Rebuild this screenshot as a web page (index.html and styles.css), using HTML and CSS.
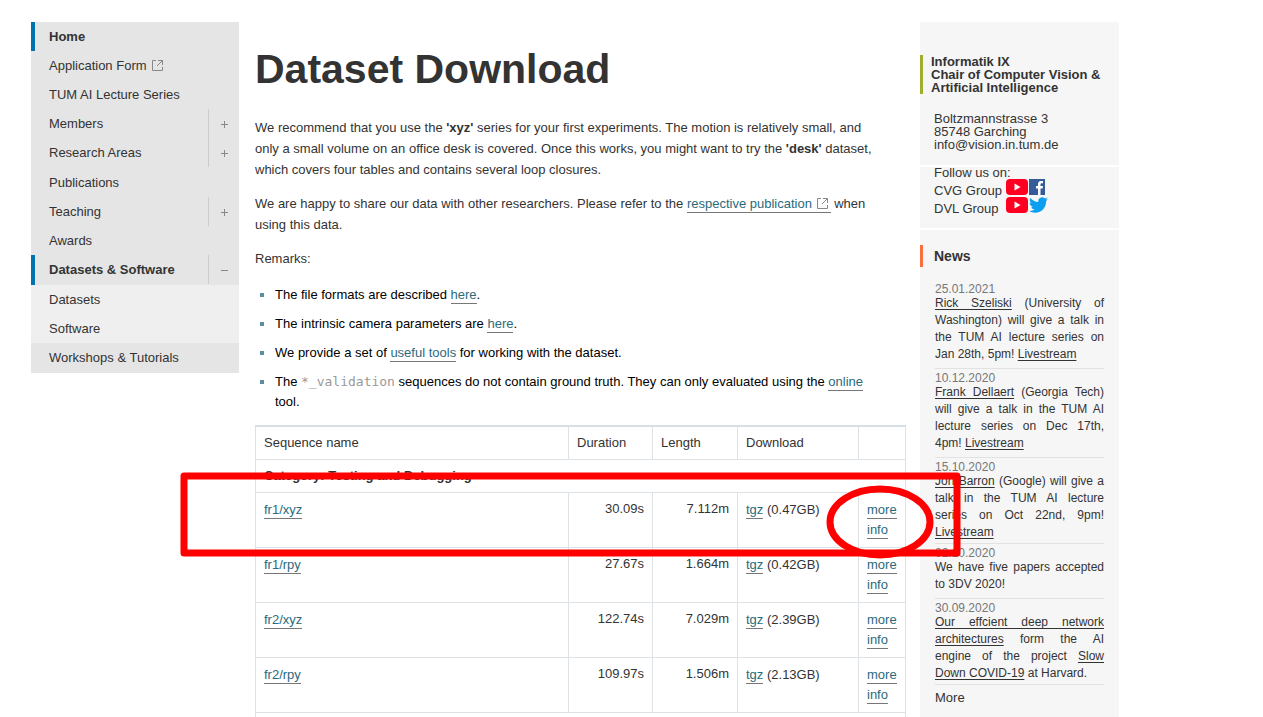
FILE: index.html
```html
<!DOCTYPE html>
<html lang="en">
<head>
<meta charset="utf-8">
<title>Dataset Download</title>
<link rel="stylesheet" href="styles.css">
</head>
<body>
<div class="page">
  <nav class="menu" aria-label="Main">
    <ul class="menu-list">
      <li class="menu-item current"><a href="#">Home</a></li>
      <li class="menu-item"><a href="#">Application Form <svg class="ext" viewBox="0 0 11 11"><path d="M4 .5H.5v10h10V7M6 .5h4.500V5M10.500.5 5 6"/></svg></a></li>
      <li class="menu-item"><a href="#">TUM AI Lecture Series</a></li>
      <li class="menu-item"><a href="#">Members</a><button class="toggle" aria-label="Expand Members"><svg viewBox="0 0 7 7"><path d="M0 3.500h7M3.500 0v7"/></svg></button></li>
      <li class="menu-item spaced"><a href="#">Research Areas</a><button class="toggle" aria-label="Expand Research Areas"><svg viewBox="0 0 7 7"><path d="M0 3.500h7M3.500 0v7"/></svg></button></li>
      <li class="menu-item"><a href="#">Publications</a></li>
      <li class="menu-item"><a href="#">Teaching</a><button class="toggle" aria-label="Expand Teaching"><svg viewBox="0 0 7 7"><path d="M0 3.500h7M3.500 0v7"/></svg></button></li>
      <li class="menu-item"><a href="#">Awards</a></li>
      <li class="menu-item current spaced"><a href="#">Datasets &amp; Software</a><button class="toggle" aria-label="Collapse Datasets and Software"><svg viewBox="0 0 7 7"><path d="M0 3.500h7"/></svg></button></li>
      <li class="menu-item sub"><a href="#">Datasets</a></li>
      <li class="menu-item sub"><a href="#">Software</a></li>
      <li class="menu-item spaced"><a href="#">Workshops &amp; Tutorials</a></li>
    </ul>
  </nav>

  <main class="content">
    <h1 class="title">Dataset Download</h1>
    <p class="para">We recommend that you use the <b>'xyz'</b> series for your first experiments. The motion is relatively small, and<br>only a small volume on an office desk is covered. Once this works, you might want to try the <b>'desk'</b> dataset,<br>which covers four tables and contains several loop closures.</p>
    <p class="para">We are happy to share our data with other researchers. Please refer to the <a class="link" href="#">respective publication <svg class="ext" viewBox="0 0 11 11"><path d="M4 .5H.5v10h10V7M6 .5h4.500V5M10.500.5 5 6"/></svg></a> when<br>using this data.</p>
    <p class="para">Remarks:</p>
    <ul class="remarks">
      <li>The file formats are described <a class="link" href="#">here</a>.</li>
      <li>The intrinsic camera parameters are <a class="link" href="#">here</a>.</li>
      <li>We provide a set of <a class="link" href="#">useful tools</a> for working with the dataset.</li>
      <li>The <code>*_validation</code> sequences do not contain ground truth. They can only evaluated using the <a class="link" href="#">online</a><br>tool.</li>
    </ul>
    <table class="sequences">
      <colgroup><col><col class="c-duration"><col class="c-length"><col class="c-download"><col class="c-more"></colgroup>
      <thead>
        <tr><th>Sequence name</th><th>Duration</th><th>Length</th><th>Download</th><th></th></tr>
      </thead>
      <tbody>
        <tr class="category"><td colspan="5"><b>Category: Testing and Debugging</b></td></tr>
        <tr><td><a class="link" href="#">fr1/xyz</a></td><td class="num">30.09s</td><td class="num">7.112m</td><td><a class="link" href="#">tgz</a> (0.47GB)</td><td><a class="link" href="#">more info</a></td></tr>
        <tr><td><a class="link" href="#">fr1/rpy</a></td><td class="num">27.67s</td><td class="num">1.664m</td><td><a class="link" href="#">tgz</a> (0.42GB)</td><td><a class="link" href="#">more info</a></td></tr>
        <tr><td><a class="link" href="#">fr2/xyz</a></td><td class="num">122.74s</td><td class="num">7.029m</td><td><a class="link" href="#">tgz</a> (2.39GB)</td><td><a class="link" href="#">more info</a></td></tr>
        <tr><td><a class="link" href="#">fr2/rpy</a></td><td class="num">109.97s</td><td class="num">1.506m</td><td><a class="link" href="#">tgz</a> (2.13GB)</td><td><a class="link" href="#">more info</a></td></tr>
        <tr><td colspan="5"></td></tr>
      </tbody>
    </table>
  </main>

  <aside class="side">
    <section class="address">
      <h2 class="chair">Informatik IX<br>Chair of Computer Vision &amp;<br>Artificial Intelligence</h2>
      <address class="lines">Boltzmannstrasse 3<br>85748 Garching<br>info@vision.in.tum.de</address>
    </section>
    <section class="follow">
      <div>Follow us on:</div>
      <div class="group"><span class="group-name">CVG Group</span>
        <a href="#" aria-label="CVG on YouTube"><svg class="yt" viewBox="0 0 22 16"><rect width="22" height="16" rx="4" fill="#ff0022"/><path d="M8.500 4.500v7l6-3.500z" fill="#fff"/></svg></a>
        <a href="#" aria-label="CVG on Facebook"><svg class="sq" viewBox="0 0 16 16"><path fill="#365b99" d="M0 0h16v16H0z"/><path fill="#fff" d="M9 16V9.500H7V7h2V5.200C9 3.200 10.200 2 12 2h2v2.300h-1.300c-.8 0-1.200.4-1.200 1.100V7H14l-.4 2.500h-2.100V16z"/></svg></a></div>
      <div class="group"><span class="group-name">DVL Group</span>
        <a href="#" aria-label="DVL on YouTube"><svg class="yt" viewBox="0 0 22 16"><rect width="22" height="16" rx="4" fill="#ff0022"/><path d="M8.500 4.500v7l6-3.500z" fill="#fff"/></svg></a>
        <a href="#" aria-label="DVL on Twitter"><svg class="tw" viewBox="0 2 24 20"><path fill="#0a9ff0" d="M23.950 4.570a10 10 0 0 1-2.820.77 4.960 4.960 0 0 0 2.160-2.720c-.95.55-2 .95-3.130 1.180a4.920 4.920 0 0 0-8.380 4.480C7.690 8.090 4.070 6.130 1.640 3.160a4.820 4.820 0 0 0-.67 2.480c0 1.710.87 3.210 2.190 4.100a4.900 4.900 0 0 1-2.230-.62v.06a4.920 4.920 0 0 0 3.950 4.830 5 5 0 0 1-2.210.08 4.940 4.940 0 0 0 4.600 3.420A9.870 9.870 0 0 1 0 19.540a13.990 13.990 0 0 0 7.550 2.210c9.050 0 14-7.500 14-13.980 0-.21 0-.42-.02-.63a9.940 9.940 0 0 0 2.420-2.570z"/></svg></a></div>
    </section>
    <section class="news">
      <h2 class="news-title">News</h2>
      <div class="news-list">
        <article class="entry"><time>25.01.2021</time><p><a href="#">Rick Szeliski</a> (University of Washington) will give a talk in the TUM AI lecture series on Jan 28th, 5pm! <a href="#">Livestream</a></p></article>
        <article class="entry"><time>10.12.2020</time><p><a href="#">Frank Dellaert</a> (Georgia Tech) will give a talk in the TUM AI lecture series on Dec 17th, 4pm! <a href="#">Livestream</a></p></article>
        <article class="entry tight"><time>15.10.2020</time><p><a href="#">Jon Barron</a> (Google) will give a talk in the TUM AI lecture series on Oct 22nd, 9pm! <a href="#">Livestream</a></p></article>
        <article class="entry"><time>02.10.2020</time><p>We have five papers accepted to 3DV 2020!</p></article>
        <article class="entry tight"><time>30.09.2020</time><p><a href="#">Our effcient deep network architectures</a> form the AI engine of the project <a href="#">Slow Down COVID-19</a> at Harvard.</p></article>
        <a class="more" href="#">More</a>
      </div>
    </section>
  </aside>
</div>
<svg class="marks" width="800" height="100" viewBox="0 0 800 100" aria-hidden="true">
  <rect x="14" y="16" width="773" height="77"/>
  <ellipse cx="710" cy="62" rx="50" ry="33"/>
</svg>
</body>
</html>
```
FILE: styles.css
```css
* { box-sizing: border-box; }

body {
  margin: 0;
  height: 100vh;
  overflow: hidden;
  position: relative;
  background: #fff;
  color: #333;
  font-family: "Liberation Sans", Arial, sans-serif;
  font-size: 13px;
}

h1, h2, p, ul { margin: 0; padding: 0; }
ul { list-style: none; }
a { color: inherit; text-decoration: none; }

.page {
  display: grid;
  grid-template-columns: 208px minmax(0, 1fr) 199px;
  min-height: 100vh;
  padding: 22px 144px 0 31px;
}

.menu-item {
  display: flex;
  line-height: 29px;
  background: #e5e5e5;
  border-left: 4px solid #e5e5e5;
}
.menu-item a { flex: 1; padding-left: 14px; }
.menu-item.spaced { padding-bottom: 1px; }
.menu-item.current { border-left-color: #0073ae; font-weight: bold; }
.menu-item.sub { background: #efefef; border-left-color: #efefef; }
.menu-item .ext { margin-left: 2px; }

.toggle {
  width: 31px;
  padding: 0;
  border: 0;
  border-left: 1px solid #ccc;
  background: none;
}
.toggle svg { display: block; width: 7px; height: 7px; margin: 1px auto 0 12px; }
.toggle path { stroke: #888; }

.ext { width: 11px; height: 11px; fill: none; stroke: #888; vertical-align: -1px; }

.content { padding: 0 14px 0 16px; }

.title {
  margin: 23px 0 24px;
  font-size: 41px;
  line-height: 48px;
}

.para { margin-bottom: 13px; line-height: 21px; }

.link { color: #2b6a7c; border-bottom: 1px solid #777; padding-bottom: 1px; }
.para .link { padding-right: 3px; }
.para .ext { margin-left: 1px; }

.remarks { padding-left: 20px; color: #000; line-height: 20px; margin-top: 16px; }
.remarks li { position: relative; margin-bottom: 9px; }
.remarks li:last-child { margin-bottom: 13px; }
.remarks li::before {
  content: "";
  position: absolute;
  left: -15px;
  top: 8px;
  width: 4px;
  height: 4px;
  background: #5b8f9e;
}
.remarks code { color: #999; font: 13px "DejaVu Sans Mono", monospace; }

.sequences {
  width: 100%;
  table-layout: fixed;
  border-collapse: collapse;
  border: 1px solid #d7dfe6;
  border-top-width: 2px;
  line-height: 20px;
}
.c-duration { width: 84px; }
.c-length { width: 85px; }
.c-download { width: 121px; }
.c-more { width: 47px; }
.sequences th, .sequences td {
  padding: 7px 8px;
  border: 1px solid #dde2e6;
  text-align: left;
  vertical-align: top;
  font-weight: normal;
}
.sequences th { line-height: 18px; }
.sequences .category td { padding-top: 6px; padding-bottom: 6px; }
.sequences .num { text-align: right; line-height: 18px; }

.side { background: #f6f6f6; }

.address { padding-top: 33px; line-height: 13px; border-bottom: 2px solid #fff; }
.chair {
  padding-left: 8px;
  border-left: 3px solid #9fae2d;
  font-size: 13px;
  line-height: 13px;
  white-space: nowrap;
}
.lines { padding: 18px 0 14px 14px; font-style: normal; }

.follow { padding: 0 0 13px 14px; line-height: 12px; border-bottom: 2px solid #fff; }
.group { display: flex; height: 18px; line-height: 18px; gap: 1px; }
.group-name { width: 71px; padding-top: 3px; }
.group svg { display: block; height: 16px; }
.yt { width: 22px; }
.sq { width: 16px; }
.tw { width: 19px; }

.news-title {
  margin: 15px 0 17px;
  padding-left: 11px;
  border-left: 3px solid #f9703e;
  font-size: 14px;
  line-height: 22px;
}
.news-list { padding: 0 15px; font-size: 12px; }
.entry { border-bottom: 1px solid #e2e2e2; padding-bottom: 5px; line-height: 17px; }
.entry.tight { padding-bottom: 2px; }
.entry + .entry { padding-top: 4px; }
.entry time { display: block; line-height: 11px; color: #777; }
.entry p { text-align: justify; }
.entry a { text-decoration: underline; text-underline-offset: 2px; }
.more { display: block; font-size: 13px; line-height: 26px; }

.marks {
  position: absolute;
  left: 170px;
  top: 460px;
  fill: none;
  stroke: #f00;
  stroke-width: 7px;
  stroke-linejoin: round;
}
```
